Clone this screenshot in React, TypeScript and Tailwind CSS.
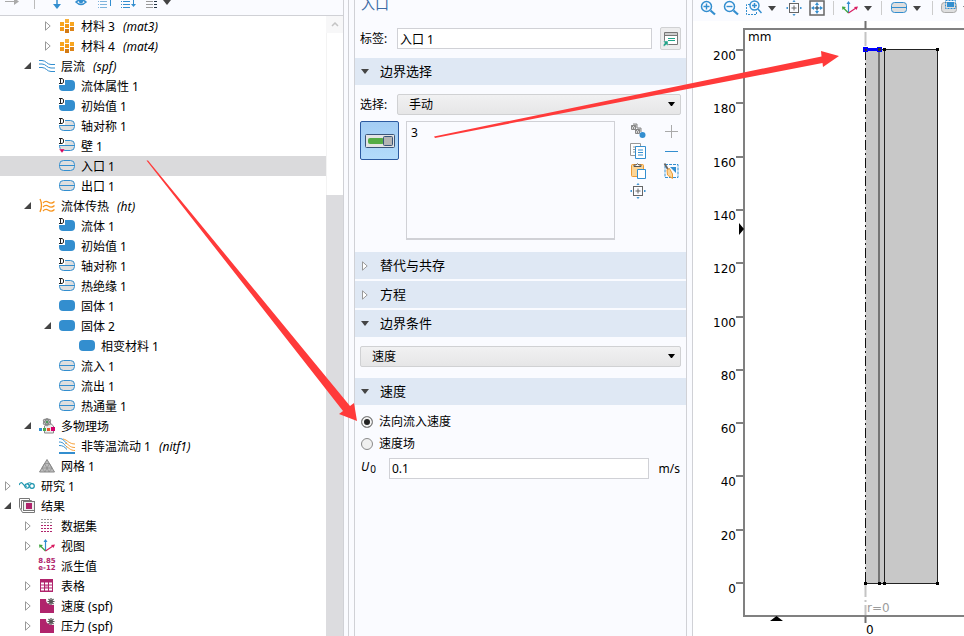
import type { ReactNode } from "react";

const BLUE = "#338ecf";
const MAGENTA = "#b0246c";

type IconProps = { children: ReactNode; size?: number };

function Icon({ children, size = 16 }: IconProps) {
  return (
    <svg width={size} height={size} viewBox={`0 0 ${size} ${size}`} fill="none" className="block shrink-0" aria-hidden="true">
      {children}
    </svg>
  );
}

/* ---------- tree icons ---------- */

function DefaultMark() {
  return (
    <>
      <path d="M0 0h6v7H0z" fill="#fff" />
      <path d="M0 .5h3M1.500 1v4M0 5.500h3M3 .5l1.500 1v3L3 5.500" stroke="#222" />
    </>
  );
}

function Domain({ mark = false }: { mark?: boolean }) {
  return (
    <Icon>
      <rect x="0" y="2" width="16" height="11" rx="4" fill={BLUE} />
      {mark && <DefaultMark />}
    </Icon>
  );
}

function Boundary({ mark = false, pin = false }: { mark?: boolean; pin?: boolean }) {
  return (
    <Icon>
      <rect x="0.5" y="2.5" width="15" height="10" rx="4" fill="#dedede" stroke={BLUE} />
      <path d="M1 7.5h14" stroke={BLUE} />
      {mark && <DefaultMark />}
      {mark && <path d="M1 7.5h14" stroke={BLUE} />}
      {pin && <path d="M0 11h6l-3 4z" fill="#d4005a" stroke="#fff" strokeWidth="0.4" />}
    </Icon>
  );
}

function Material() {
  const cells: [number, number, string][] = [
    [1, 4, "#f8a51f"], [6, 1, "#f8b03a"], [11, 4, "#f8a51f"],
    [1, 9, "#f39a1a"], [6, 6, "#f39a1a"], [11, 9, "#dd8418"],
    [6, 11, "#d27a14"],
  ];
  return (
    <Icon>
      {cells.map(([x, y, c]) => (
        <rect key={`${x}-${y}`} x={x} y={y} width="4" height="4" fill={c} />
      ))}
    </Icon>
  );
}

function Laminar() {
  return (
    <Icon>
      <path d="M0 2.5h3c4 0 5 4 9 4h4M0 6h3c4 0 5 4 9 4h4M0 9.500h3c4 0 5 4 9 4h4" stroke={BLUE} />
    </Icon>
  );
}

function Heat() {
  return (
    <Icon>
      <path d="M1 1q3 6 0 13" stroke="#f7941d" strokeWidth="1.3" />
      <path d="M4 5q2.500-3 5.500-.8t6-.7M4 9q2.500-3 5.500-.8t6-.7M4 13q2.500-3 5.500-.8t6-.7" stroke="#f7941d" strokeWidth="1.2" />
    </Icon>
  );
}

function Multiphysics() {
  return (
    <Icon>
      <path d="M5.500 8v7h9V8l-4-3.500z" fill="#eee" stroke="#888" />
      <ellipse cx="8" cy="4" rx="2" ry="4" stroke="#888" />
      <ellipse cx="8" cy="4" rx="2" ry="4" stroke="#888" transform="rotate(60 8 4)" />
      <ellipse cx="8" cy="4" rx="2" ry="4" stroke="#888" transform="rotate(120 8 4)" />
      <circle cx="8" cy="4" r="1.200" fill="#4a9a5a" />
      <rect x="0" y="10" width="3" height="3" fill={BLUE} />
      <rect x="4" y="10" width="3" height="3" fill="#4aa84a" />
      <rect x="8" y="10" width="3" height="3" fill="#e8542c" />
      <rect x="12" y="9" width="4" height="4" fill="#d4006a" />
    </Icon>
  );
}

function NonIsothermal() {
  return (
    <Icon>
      <path d="M0 .5c5 0 5 3 8 5M0 4c5 0 5 3 8 5M0 7.500c4 0 5 1 8 4" stroke={BLUE} />
      <path d="M4 1c5 1 6 5 12 5M6 5c4 1 4 4.500 10 4.500M7 8.500c3 1 4 4 9 4" stroke="#f7a13a" />
      <path d="M0 15h16" stroke={BLUE} strokeWidth="2" />
    </Icon>
  );
}

function Mesh() {
  return (
    <Icon>
      <path d="M8 1.500 15.500 14H.5z" fill="#bdbdbd" stroke="#888" />
      <path d="M5.500 5.500h5L13 10H3zM5.500 5.500 8 10l2.500-4.500M3 10l3 4 2-4 2 4 3-4" stroke="#888" strokeWidth="0.700" />
    </Icon>
  );
}

function Study() {
  return (
    <Icon>
      <path d="M0 7q2-4 4-1t4 2" stroke="#1a94ae" strokeWidth="1.200" />
      <circle cx="8" cy="8" r="2.200" stroke="#1a94ae" strokeWidth="1.200" />
      <circle cx="13" cy="8" r="2.300" stroke="#1a94ae" strokeWidth="1.200" />
      <path d="M8 5.500q3-1.500 5 0" stroke="#1a94ae" />
    </Icon>
  );
}

function Results() {
  return (
    <Icon>
      <path d="M.5 9.500v-9h10v2M2.500 11.500v-9h10v2" stroke="#777" />
      <rect x="4.500" y="3.500" width="11" height="9" fill="#eee" stroke="#777" />
      <rect x="7" y="5" width="6" height="6" fill={MAGENTA} />
      <path d="M.5 9.500l3 5h12v-2" stroke="#777" />
    </Icon>
  );
}

function DataSet() {
  return (
    <Icon>
      {[2, 5, 8, 11].map((x) => (
        <g key={x}>
          <path d={`M${x} 1.500h2M${x} 4.500h2`} stroke="#999" />
          <path d={`M${x} 7.500h2M${x} 10.500h2M${x} 13.500h2`} stroke={MAGENTA} />
        </g>
      ))}
    </Icon>
  );
}

function Axes() {
  return (
    <Icon>
      <path d="M6.500 13V2" stroke={BLUE} strokeWidth="1.200" />
      <path d="M4.500 4l2-3 2 3z" fill={BLUE} />
      <path d="M6.500 13 1.500 8" stroke="#3fa63f" strokeWidth="1.200" />
      <path d="M0 6.500l4 .5-3.500 3z" fill="#3fa63f" />
      <path d="M6.500 13 14 8" stroke="#d81b60" strokeWidth="1.200" />
      <path d="M16 6.500l-4 .5 2.500 3z" fill="#d81b60" />
    </Icon>
  );
}

function Derived() {
  return (
    <span aria-hidden="true" className="flex h-4 w-4 flex-col items-center font-['DejaVu_Sans'] text-[7px] font-bold leading-[7px] text-[#b0246c]">
      <span>8.85</span>
      <span>e-12</span>
    </span>
  );
}

function TableIcon() {
  return (
    <Icon>
      <rect x="1" y="1" width="13" height="13" fill={MAGENTA} />
      <path d="M2 4.500h3v2H2zM2 7.500h3v2H2zM2 10.500h3v2H2zM6 4.500h3v2H6zM10 4.500h3v2h-3zM10 7.500h3v2h-3zM6 10.500h3v2H6zM10 10.500h3v2h-3z" fill="#fff" />
      <path d="M6 7.500h3v2H6z" fill="#e3a8c6" />
    </Icon>
  );
}

function PlotGroup() {
  return (
    <Icon>
      <path d="M1 1h6q-.5 6 8 6v8H1z" fill={MAGENTA} />
      <path d="M12 0v7M8.500 3.500h7M9.500 1l5 5M14.500 1l-5 5" stroke="#555" strokeWidth="1.200" />
    </Icon>
  );
}

/* ---------- model tree ---------- */

type Node = { level: number; label: string; tag?: string; icon: ReactNode; state?: "open" | "closed"; selected?: boolean };

const NODES: Node[] = [
  { level: 2, label: "材料 3", tag: "(mat3)", icon: <Material />, state: "closed" },
  { level: 2, label: "材料 4", tag: "(mat4)", icon: <Material />, state: "closed" },
  { level: 1, label: "层流", tag: "(spf)", icon: <Laminar />, state: "open" },
  { level: 2, label: "流体属性 1", icon: <Domain mark /> },
  { level: 2, label: "初始值 1", icon: <Domain mark /> },
  { level: 2, label: "轴对称 1", icon: <Boundary mark /> },
  { level: 2, label: "壁 1", icon: <Boundary mark pin /> },
  { level: 2, label: "入口 1", icon: <Boundary />, selected: true },
  { level: 2, label: "出口 1", icon: <Boundary /> },
  { level: 1, label: "流体传热", tag: "(ht)", icon: <Heat />, state: "open" },
  { level: 2, label: "流体 1", icon: <Domain mark /> },
  { level: 2, label: "初始值 1", icon: <Domain mark /> },
  { level: 2, label: "轴对称 1", icon: <Boundary mark /> },
  { level: 2, label: "热绝缘 1", icon: <Boundary mark /> },
  { level: 2, label: "固体 1", icon: <Domain /> },
  { level: 2, label: "固体 2", icon: <Domain />, state: "open" },
  { level: 3, label: "相变材料 1", icon: <Domain /> },
  { level: 2, label: "流入 1", icon: <Boundary /> },
  { level: 2, label: "流出 1", icon: <Boundary /> },
  { level: 2, label: "热通量 1", icon: <Boundary /> },
  { level: 1, label: "多物理场", icon: <Multiphysics />, state: "open" },
  { level: 2, label: "非等温流动 1", tag: "(nitf1)", icon: <NonIsothermal /> },
  { level: 1, label: "网格 1", icon: <Mesh /> },
  { level: 0, label: "研究 1", icon: <Study />, state: "closed" },
  { level: 0, label: "结果", icon: <Results />, state: "open" },
  { level: 1, label: "数据集", icon: <DataSet />, state: "closed" },
  { level: 1, label: "视图", icon: <Axes />, state: "closed" },
  { level: 1, label: "派生值", icon: <Derived /> },
  { level: 1, label: "表格", icon: <TableIcon />, state: "closed" },
  { level: 1, label: "速度 (spf)", icon: <PlotGroup />, state: "closed" },
  { level: 1, label: "压力 (spf)", icon: <PlotGroup />, state: "closed" },
];

const INDENT = ["pl-0", "pl-5", "pl-10", "pl-[60px]"];

function TreeArrow({ state }: { state?: "open" | "closed" }) {
  return (
    <span className="flex w-[19px] shrink-0 justify-center pr-[3px]">
      {state === "open" && (
        <svg width="8" height="8" className="block" aria-hidden="true"><path d="M7 0v7H0z" fill="#444" /></svg>
      )}
      {state === "closed" && (
        <svg width="6" height="10" className="block" aria-hidden="true"><path d="M.5 .8v8.400L5.200 5z" fill="#fff" stroke="#999" /></svg>
      )}
    </span>
  );
}

function TreeRow({ node }: { node: Node }) {
  return (
    <li
      role="treeitem"
      aria-level={node.level + 1}
      aria-selected={!!node.selected}
      className={`flex h-5 items-center whitespace-pre ${INDENT[node.level]} ${node.selected ? "bg-[#dadadc]" : ""}`}
    >
      <TreeArrow state={node.state} />
      {node.icon}
      <span className="ml-1.5 pt-0.5 leading-5">{node.label}</span>
      {node.tag && <i className="ml-2 pt-0.5 leading-5">{node.tag}</i>}
    </li>
  );
}

function ToolButton({ label, className = "w-6", children }: { label: string; className?: string; children: ReactNode }) {
  return (
    <button type="button" aria-label={label} className={`flex shrink-0 items-center justify-center ${className}`}>
      {children}
    </button>
  );
}

function Caret({ color = "#444" }: { color?: string }) {
  return (
    <svg width="8" height="5" className="block" aria-hidden="true"><path d="M0 0h8L4 5z" fill={color} /></svg>
  );
}

function TreeToolbar() {
  return (
    <div className="flex h-[15px] items-start overflow-hidden">
      <ToolButton label="前进"><Icon><path d="M1 1.500h10" stroke="#aaa" /><path d="M10-2l5 3.500-5 3.500z" fill="#aaa" /></Icon></ToolButton>
      <span className="mx-[10px] h-[9px] w-px bg-[#bbb]" />
      <ToolButton label="下移"><Icon><path d="M8 0v5" stroke={BLUE} strokeWidth="1.500" /><path d="M4 4h8L8 9z" fill={BLUE} /></Icon></ToolButton>
      <ToolButton label="显示"><Icon><path d="M3 2q5-4 10 0-5 5-10 0z" stroke={BLUE} strokeWidth="1.500" /><circle cx="8" cy="1.500" r="2" fill={BLUE} /></Icon></ToolButton>
      <ToolButton label="折叠"><Icon><path d="M1 1.500h1M3 1.500h7M1 4.500h1M3 4.500h7M1 7.500h1M3 7.500h7" stroke="#7fb4dc" /><path d="M13.500 0v6" stroke={BLUE} /></Icon></ToolButton>
      <ToolButton label="展开"><Icon><path d="M0 1.500h1M2 1.500h7M0 4.500h1M2 4.500h7M0 7.500h1M2 7.500h7" stroke={BLUE} /><path d="M12.500 0v5" stroke={BLUE} /><path d="M10 4h5l-2.500 3z" fill={BLUE} /></Icon></ToolButton>
      <ToolButton label="节点文本"><Icon><path d="M1 1.500h7M1 4.500h7M1 7.500h7" stroke="#999" /><path d="M9 1.500h3M9 4.500h3M9 7.500h3" stroke="#234" /></Icon></ToolButton>
      <ToolButton label="更多" className="-ml-1 h-1 w-3"><Caret /></ToolButton>
    </div>
  );
}

function ModelTree() {
  return (
    <section aria-label="模型开发器" className="flex w-[344px] shrink-0 flex-col border-r border-[#d0d1d6]">
      <TreeToolbar />
      <div className="flex min-h-0 flex-1 border-t border-[#d0d1d6] bg-white">
        <ul role="tree" className="min-w-0 flex-1 overflow-hidden">
          {NODES.map((node, i) => <TreeRow key={i} node={node} />)}
        </ul>
        <div className="flex w-[17px] flex-col bg-[#dcdcdf]">
          <button type="button" aria-label="向上滚动" className="flex h-[17px] items-center justify-center bg-[#f7f7f8]">
            <svg width="8" height="5" aria-hidden="true"><path d="M1 4l3-3 3 3" fill="none" stroke="#c4c4c4" strokeWidth="1.500" /></svg>
          </button>
          <div className="h-[162px] border-l border-[#f3f3f3] bg-white" />
        </div>
      </div>
    </section>
  );
}

/* ---------- settings ---------- */

function Section({ title, open = false }: { title: string; open?: boolean }) {
  return (
    <h2>
      <button type="button" aria-expanded={open} className="flex h-[27px] w-full items-center bg-[#dfe8f4] text-[13px]">
        <span className="ml-[5px] flex w-[9px] justify-center">
          {open ? <Caret /> : (
            <svg width="6" height="10" aria-hidden="true"><path d="M.5 .8v8.400L5.200 5z" fill="#fff" stroke="#999" /></svg>
          )}
        </span>
        <span className="ml-[11px]">{title}</span>
      </button>
    </h2>
  );
}

function Dropdown({ id, value, label }: { id: string; value: string; label?: string }) {
  return (
    <span className="relative flex flex-1">
      <select id={id} aria-label={label} className="h-[21px] w-full appearance-none rounded-xs border border-[#d0d1d3] bg-linear-to-b from-[#f1f1f2] to-[#e6e6e7] pl-[11px] leading-[19px]">
        <option>{value}</option>
      </select>
      <span className="pointer-events-none absolute right-[6px] top-2">
        <svg width="7" height="5" className="block" aria-hidden="true"><path d="M0 0h7L4 4H3z" fill="#000" /></svg>
      </span>
    </span>
  );
}

function Extents({ color = "#666" }: { color?: string }) {
  return (
    <Icon>
      <rect x="3.500" y="3.500" width="9" height="9" stroke={color} />
      <path d="M8 5.500v5M5.500 8h5" stroke={color} />
      <path d="M7 1.500 8 .5l1 1zM7 14.500l1 1 1-1zM1.500 7l-1 1 1 1zM14.500 7l1 1-1 1z" fill={BLUE} stroke={BLUE} strokeWidth="0.800" />
    </Icon>
  );
}

function SelectionTools() {
  return (
    <div className="ml-[15px] grid grid-cols-[33px_16px] auto-rows-[20px]">
      <button type="button" aria-label="创建选择">
        <Icon>
          <path d="M1.500 2.500h4v4h-4zM5.500 6.500h4v4h-4zM3 1h4v4M7 5h4v4" fill="#d8d8d8" stroke="#888" />
          <path d="M1.500 2.500l2 2 2-2M5.500 6.500l2 2 2-2M3.500 4.500v2M7.500 8.500v2" stroke="#888" />
          <circle cx="12.500" cy="12" r="3" fill={BLUE} />
        </Icon>
      </button>
      <button type="button" aria-label="添加到选择"><Icon><path d="M8.500 2v13M2 8.500h13" stroke="#aaa" /></Icon></button>
      <button type="button" aria-label="复制选择">
        <Icon>
          <path d="M.5.5h10v12H.5zM3 4h3M3 6.500h3M3 9h3" fill="#fff" stroke="#999" />
          <path d="M5.500 3.500h10v12h-10z" fill="#fff" stroke={BLUE} />
          <path d="M8 7h5M8 9.500h5M8 12h5" stroke={BLUE} />
        </Icon>
      </button>
      <button type="button" aria-label="从选择中移除"><Icon><path d="M2 8.500h13" stroke={BLUE} /></Icon></button>
      <button type="button" aria-label="粘贴选择">
        <Icon>
          <rect x="1.500" y="1.500" width="12" height="12" rx="1" fill="#fcd596" stroke="#ee9a32" />
          <path d="M4 3.500V2h2q1.500-2.500 3 0h2v1.500z" fill="#fff" stroke="#555" />
          <path d="M7.500 6.500h8v9h-8z" fill="#fff" stroke={BLUE} />
        </Icon>
      </button>
      <button type="button" aria-label="清除选择">
        <Icon>
          <rect x="2" y="1.500" width="13" height="13" stroke={BLUE} strokeDasharray="3 1" />
          <path d="M7 4h6v6z" fill={BLUE} />
          <path d="M1.500.5l3.500 6" stroke="#666" strokeWidth="1.800" />
          <path d="M4 7l2.500-1.500 3 5.500v4.500L4.500 12z" fill="#fcd596" stroke="#ee9a32" />
        </Icon>
      </button>
      <button type="button" aria-label="缩放到选择"><Extents /></button>
    </div>
  );
}

const RADIO = "h-3 w-3 appearance-none rounded-full border border-[#8a8a8a] bg-[#f0f0f0] checked:bg-[#222] checked:shadow-[inset_0_0_0_2px_#f4f4f4]";

function Settings() {
  return (
    <section aria-label="设置" className="ml-1 flex w-[345px] shrink-0 flex-col border-x border-[#d0d1d6] px-[5px]">
      <div className="flex-1 border-x border-[#d0d1d6]">
        <h1 className="-mt-2 h-[35px] pl-[6px] text-sm leading-6 text-[#3d6ba5]">入口</h1>
        <div className="flex items-center px-[5px]">
          <label htmlFor="label" className="w-[37px]">标签:</label>
          <input id="label" defaultValue="入口 1" className="h-[21px] min-w-0 flex-1 border border-[#d0d1d6] bg-white px-0.5" />
          <button type="button" aria-label="转到源" className="ml-2 flex h-[23px] w-[21px] items-center justify-center rounded-xs border border-[#d0d1d3] bg-[#ededee]">
            <Icon>
              <path d="M1.500 1.500h13v12h-13z" fill="#fff" stroke="#777" />
              <path d="M2 2h12v2H2z" fill="#ccc" />
              <path d="M2 4.500h12" stroke="#777" />
              <path d="M5 7.500h7M5 9.500h7" stroke="#20a58a" />
              <path d="M0 10h5v5l-1.500-1.500L1 15.500 0 14l2-2z" fill="#20a58a" stroke="#ededee" strokeWidth="0.500" />
            </Icon>
          </button>
        </div>

        <div className="mt-2"><Section title="边界选择" open /></div>
        <div className="mt-[9px] flex items-center px-[5px]">
          <label htmlFor="selection" className="w-[37px]">选择:</label>
          <Dropdown id="selection" value="手动" />
        </div>
        <div className="mt-[6px] flex items-start pl-[5px] pr-[7px]">
          <button type="button" aria-label="激活选择" aria-pressed="true" className="flex h-[39px] w-[39px] shrink-0 items-center justify-center rounded-xs border border-[#2c5aa0] bg-linear-to-b from-[#a4cdf4] to-[#b3dcfb]">
            <svg width="30" height="14" aria-hidden="true">
              <rect x="0.500" y="0.500" width="29" height="13" rx="1" fill="#e4e4e4" stroke="#3a5578" />
              <rect x="3" y="4" width="16" height="6" rx="2" fill="#55ac45" />
              <rect x="18.500" y="2.500" width="9" height="9" rx="1" fill="#b4b4b4" stroke="#3a5578" />
            </svg>
          </button>
          <select multiple size={5} aria-label="选定的边界" className="ml-[7px] h-[119px] min-w-0 flex-1 appearance-none overflow-hidden border border-b-2 border-[#d0d1d6] bg-[#fafbff] px-1 py-0.5">
            <option>3</option>
          </select>
          <SelectionTools />
        </div>

        <div className="mt-3 flex flex-col gap-0.5">
          <Section title="替代与共存" />
          <Section title="方程" />
          <Section title="边界条件" open />
        </div>
        <div className="mt-[9px] flex px-[5px]"><Dropdown id="condition" value="速度" label="边界条件" /></div>
        <div className="mt-[11px]"><Section title="速度" open /></div>

        <fieldset className="mt-[6px] pl-[6px]">
          <label className="flex h-[22px] items-center gap-1.5"><input type="radio" name="inflow" defaultChecked className={RADIO} />法向流入速度</label>
          <label className="flex h-[22px] items-center gap-1.5"><input type="radio" name="inflow" className={RADIO} />速度场</label>
        </fieldset>
        <div className="mt-[3px] flex items-center px-[6px]">
          <label htmlFor="u0" className="flex h-5 w-7 gap-px"><i>U</i><span className="pt-1 text-[10px]">0</span></label>
          <input id="u0" defaultValue="0.1" className="h-[21px] min-w-0 flex-1 border border-[#d0d1d6] bg-white px-0.5" />
          <span className="ml-[10px]">m/s</span>
        </div>
      </div>
    </section>
  );
}

/* ---------- graphics ---------- */

function Magnifier({ plus = false }: { plus?: boolean }) {
  return (
    <Icon>
      <circle cx="6.500" cy="6.500" r="5" stroke={BLUE} strokeWidth="1.500" />
      <path d="M10.500 10.500l4.500 4" stroke={BLUE} strokeWidth="2.200" />
      <path d={plus ? "M3.500 6.500h6M6.500 3.500v6" : "M3.500 6.500h6"} stroke={BLUE} strokeWidth="1.400" />
    </Icon>
  );
}

function Divider() {
  return <span className="h-[14px] w-px bg-[#ccc]" />;
}

function GraphicsToolbar() {
  return (
    <div className="flex h-[21px] items-start overflow-hidden bg-[#fafbff] pl-[3px]">
      <div className="flex h-4 shrink-0 items-center">
        <ToolButton label="放大"><Magnifier plus /></ToolButton>
        <ToolButton label="缩小" className="w-[22px]"><Magnifier /></ToolButton>
        <ToolButton label="缩放框">
          <Icon>
            <path d="M4 4.500H.5v10h10V12" stroke={BLUE} strokeDasharray="2 1" />
            <circle cx="8.500" cy="5.500" r="4.500" fill="#fafbff" stroke={BLUE} strokeWidth="1.400" />
            <path d="M12 9l3.500 4M6 5.500h5M8.500 3v5" stroke={BLUE} strokeWidth="1.500" />
          </Icon>
        </ToolButton>
        <ToolButton label="缩放选项" className="w-3"><Caret /></ToolButton>
        <ToolButton label="缩放到选定项" className="ml-1 w-6"><Extents /></ToolButton>
        <ToolButton label="缩放到窗口大小" className="w-[22px]">
          <Icon>
            <path d="M1 1h14v14H1z" stroke="#666" strokeWidth="1.500" />
            <path d="M8 4v8M4 8h8" stroke={BLUE} />
            <path d="M6 5l2-3 2 3zM6 11l2 3 2-3zM5 6L2 8l3 2zM11 6l3 2-3 2z" fill={BLUE} />
            <path d="M8 6v4M6 8h4" stroke="#555" />
          </Icon>
        </ToolButton>
        <span className="ml-[5px] flex items-center"><Divider /></span>
        <ToolButton label="转到视图" className="ml-1 w-6"><Axes /></ToolButton>
        <ToolButton label="视图选项" className="w-3"><Caret /></ToolButton>
        <span className="ml-[7px] flex items-center"><Divider /></span>
        <ToolButton label="选择边界" className="ml-[5px] w-6">
          <Icon>
            <rect x="0.500" y="2.500" width="15" height="10" rx="3" fill="#dedede" stroke={BLUE} />
            <path d="M1 7.500h14" stroke={BLUE} />
          </Icon>
        </ToolButton>
        <ToolButton label="选择级别" className="w-3"><Caret /></ToolButton>
        <span className="ml-[9px] flex items-center"><Divider /></span>
        <ToolButton label="选择框" className="ml-1 w-6">
          <Icon>
            <rect x="0.500" y="2.500" width="15" height="10" rx="3" fill="#dedede" stroke="#aaa" />
            <path d="M6 2h7v5H6z" fill={BLUE} />
            <path d="M4.500.5h10v8h-10z" stroke={BLUE} strokeDasharray="2 1" />
          </Icon>
        </ToolButton>
        <ToolButton label="选择框选项" className="w-3"><Caret /></ToolButton>
      </div>
    </div>
  );
}

const TICKS = [200, 180, 160, 140, 120, 100, 80, 60, 40, 20, 0];

function Plot() {
  return (
    <svg viewBox="0 0 271 615" preserveAspectRatio="xMinYMin slice" className="block h-full w-full font-['DejaVu_Sans',sans-serif] text-xs" role="img" aria-label="几何图形">
      <path d="M271 8H51V595H271" fill="none" stroke="#808080" strokeWidth="2" />
      <text x="55" y="20">mm</text>
      {TICKS.map((v) => {
        const y = Math.round(562 - (v * 533) / 200);
        return (
          <g key={v}>
            <path d={`M43 ${y}h8`} stroke="#808080" strokeWidth="2" />
            <text x="43" y={y + 10} textAnchor="end">{v}</text>
          </g>
        );
      })}
      <rect x="172.500" y="28.500" width="72" height="534" fill="#c8c8c8" />
      <path d="M172 28.500h72.500v534H172M186 28v534M191.500 28v534" fill="none" stroke="#222" />
      <path d="M172.500 29v533" stroke="#111" strokeDasharray="10 3 2 3" />
      <path d="M172.500 11v17M172.500 562v32" stroke="#c4c4c4" strokeWidth="2" strokeDasharray="14 3 2 3" />
      <path d="M172.500 0v8M172.500 595v7" stroke="#707070" strokeWidth="2" />
      {[172, 186, 191, 244].map((x) => (
        <g key={x}>
          <rect x={x - 1} y="27" width="3" height="3" />
          <rect x={x - 1} y="561" width="3" height="3" />
        </g>
      ))}
      <path d="M172 28.500h14" stroke="#0000ff" strokeWidth="3" />
      <path d="M170 26h5v5h-5zM184 26h5v5h-5z" fill="#0000ff" />
      <path d="M172 28h2v2h-2zM185 27h3v3h-3z" fill="#333" />
      <path d="M46 202v12l5-6zM77 600h13l-6.500-5z" />
      <text x="174" y="591" fill="#9c9c9c">r=0</text>
      <text x="173" y="613">0</text>
    </svg>
  );
}

function Graphics() {
  return (
    <section aria-label="图形" className="flex min-w-0 flex-1 flex-col">
      <GraphicsToolbar />
      <div className="min-h-0 flex-1 bg-white"><Plot /></div>
    </section>
  );
}

/* Red callout arrows laid over the panels. */
function Callouts() {
  return (
    <svg className="pointer-events-none absolute inset-0 h-full w-full" aria-hidden="true">
      <path d="M146.500 160.500h1.500L350 406l4-3 3 18-18-7 4-3z" fill="#ff3a3a" />
      <path d="M434 136.500 821.500 56.500l-.5-5.500 18 5-16 11-.5-4L435 138z" fill="#ff3a3a" />
    </svg>
  );
}

export default function App() {
  return (
    <main className="relative flex h-screen overflow-hidden bg-[#fafbff] font-['Noto_Sans','Noto_Sans_CJK_SC',sans-serif] text-xs text-black">
      <ModelTree />
      <Settings />
      <Graphics />
      <Callouts />
    </main>
  );
}
